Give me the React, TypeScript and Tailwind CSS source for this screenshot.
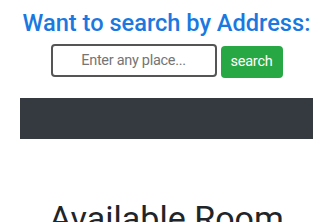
export default function App() {
  return (
    <div className="w-[333px] h-[222px] overflow-hidden bg-white font-['Roboto',sans-serif]">
      <h2 className="pt-[7px] text-center text-[23.6px] leading-[32px] font-medium text-[#1a78e0]">
        Want to search by Address:
      </h2>
      <div className="mt-[5px] flex justify-center gap-[4px]">
        <input
          type="text"
          placeholder="Enter any place..."
          className="w-[166px] h-[33px] rounded-[4px] border-2 border-[#555] px-3 text-center text-[14.5px] tracking-[-0.3px] text-[#495057] placeholder:text-[#757575] outline-none"
        />
        <button className="mt-[2px] w-[62px] h-[32px] rounded-[4px] bg-[#28a745] text-[14.5px] tracking-[-0.2px] text-white">
          search
        </button>
      </div>
      <div className="mx-[20px] mt-[20px] h-[41px] bg-[#343a40]" />
      <h1 className="mt-[59px] text-center text-[34px] leading-[40px] font-normal text-[#212529]">
        Available Room
      </h1>
    </div>
  );
}
